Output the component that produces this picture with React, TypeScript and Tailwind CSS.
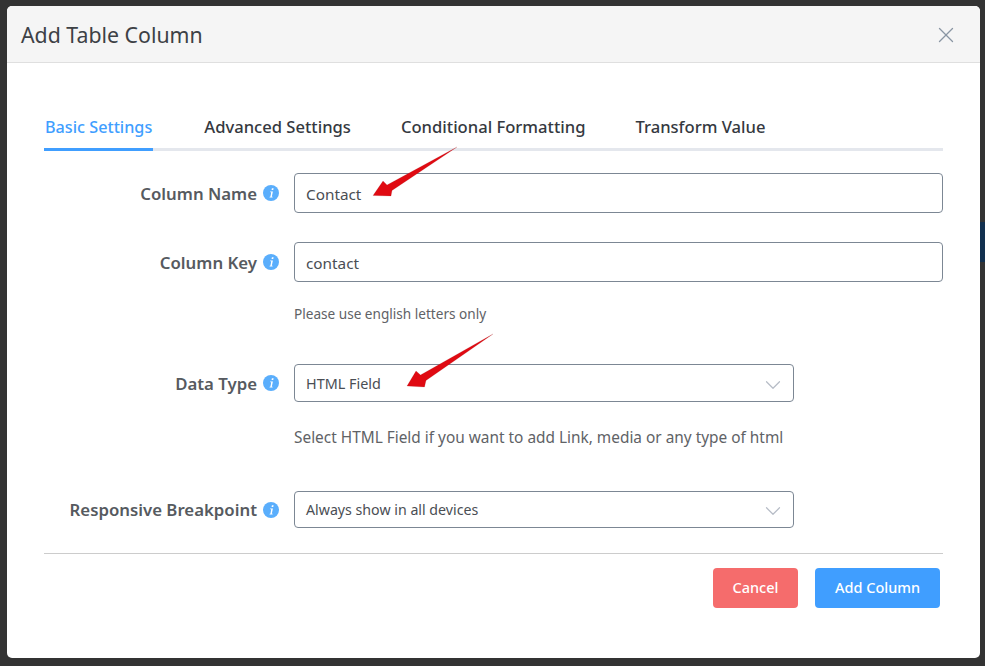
import React from 'react';
import { X, ChevronDown } from 'lucide-react';

const font = "font-['Noto_Sans','Open_Sans',sans-serif]";

const InfoIcon = () => (
  <svg width="16" height="16" viewBox="0 0 16 16" className="shrink-0">
    <circle cx="8" cy="8" r="8" fill="#5aaefc" />
    <path d="M8.9 3.2h1.7l-.35 1.7H8.55zM7 6.5h2.9L8.9 11.2c-.1.4.1.6.8.5l-.2.9H6.5l.2-.8c.5 0 .7-.2.8-.6l.7-3.6c0-.3-.2-.4-.8-.4z" fill="#fff" />
  </svg>
);

const Arrow = ({ d }: { d: string }) => (
  <svg width="985" height="666" viewBox="0 0 985 666" className="absolute left-0 top-0 overflow-visible">
    <path d={d} fill="#e00a12" stroke="#8c1a1a" strokeOpacity="0.25" strokeWidth="0.6" />
  </svg>
);

const Label = ({ text }: { text: string }) => (
  <div className="flex w-[250px] shrink-0 items-center justify-end gap-[6px] pr-[15px] text-[16.8px] font-semibold text-[#565a60]">
    <span className="pt-[1px]">{text}</span>
    <InfoIcon />
  </div>
);

const tabs = ['Basic Settings', 'Advanced Settings', 'Conditional Formatting', 'Transform Value'];

export default function App() {
  return (
    <div className={`${font} relative h-[666px] w-[985px] overflow-hidden bg-[#333333] px-[7px] pt-[6px]`}>
      <div className="absolute right-0 top-[222px] h-[40px] w-[5px] bg-[#12304f]" />
      <div className="relative flex h-[652px] w-[973px] flex-col overflow-hidden rounded-[5px] bg-white">
        <div className="flex h-[57px] shrink-0 items-center justify-between border-b border-[#dfdfdf] bg-[#f5f5f5] pl-[14px] pr-[21px] pt-[1px]">
          <h2 className="text-[21.3px] leading-none text-[#3d4145]">Add Table Column</h2>
          <X size={26} strokeWidth={1.2} className="text-[#8a96a3]" />
        </div>

        <div className="flex flex-col px-[37px]">
          <div className="mt-[51px] flex h-[37px] gap-[50px] border-b-[3px] border-[#e4e7ed] text-[16.6px] font-medium text-[#35393f]">
            {tabs.map((tab, i) => (
              <div
                key={tab}
                className={i === 0 ? 'mb-[-3px] mr-[1px] flex h-[37px] items-start border-b-[3px] border-[#409eff] pl-[1px] pr-[1px] pt-[1px] text-[16.2px] text-[#409eff]' : 'flex items-start pt-[1px]'}
              >
                {tab}
              </div>
            ))}
          </div>

          <div className="mt-[22px] flex items-center">
            <Label text="Column Name" />
            <div className="flex h-[40px] flex-1 items-center rounded-[4px] border border-[#7c8794] px-[11px] pt-[2px] text-[15.3px] text-[#4a4e54]">Contact</div>
          </div>

          <div className="mt-[29px] flex items-center">
            <Label text="Column Key" />
            <div className="flex h-[40px] flex-1 items-center rounded-[4px] border border-[#7c8794] px-[11px] pt-[2px] text-[15.3px] text-[#4a4e54]">contact</div>
          </div>
          <p className="ml-[250px] mt-[22px] text-[13.6px] leading-[20px] text-[#606266]">Please use english letters only</p>

          <div className="mt-[40px] flex items-center">
            <Label text="Data Type" />
            <div className="flex h-[38px] w-[500px] items-center justify-between rounded-[4px] border border-[#7c8794] pl-[11px] pr-[7px] text-[14.4px] text-[#4a4e54]">
              <span className="pt-[1px]">HTML Field</span>
              <ChevronDown size={26} strokeWidth={1.1} className="mt-[3px] text-[#b6bcc6]" />
            </div>
          </div>
          <p className="ml-[250px] mt-[26px] text-[15.4px] leading-[20px] text-[#606266]">Select HTML Field if you want to add Link, media or any type of html</p>

          <div className="mt-[43px] flex items-center">
            <Label text="Responsive Breakpoint" />
            <div className="flex h-[37px] w-[500px] items-center justify-between rounded-[4px] border border-[#7c8794] pl-[11px] pr-[7px] text-[14.2px] text-[#4a4e54]">
              <span>Always show in all devices</span>
              <ChevronDown size={26} strokeWidth={1.1} className="mt-[3px] text-[#b6bcc6]" />
            </div>
          </div>

          <div className="mt-[25px] border-t border-[#cccccc]" />

          <div className="mr-[3px] mt-[14px] flex justify-end gap-[17px] text-[14.5px] font-medium text-white">
            <button className="h-[40px] w-[85px] rounded-[4px] bg-[#f56c6c]">Cancel</button>
            <button className="h-[40px] w-[125px] rounded-[4px] bg-[#409eff]">Add Column</button>
          </div>
        </div>
      </div>

      {/* annotation arrows drawn over the screenshot */}
      <div className="pointer-events-none absolute left-0 top-0">
        <Arrow d="M373 195.5 L383 181 L387 185 L457 147 L392 190.5 L391 196 Z" />
        <Arrow d="M407 386 L416 371 L420.5 375 L493 334 L426 380.5 L424.5 387 Z" />
      </div>
    </div>
  );
}
